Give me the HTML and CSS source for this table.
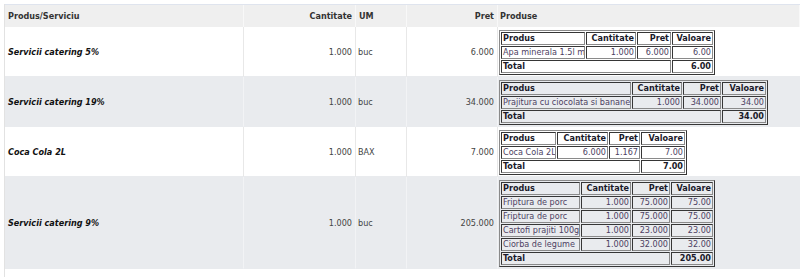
FILE: index.html
```html
<!DOCTYPE html>
<html>
<head>
<meta charset="utf-8">
<link rel="stylesheet" href="styles.css">
</head>
<body>
<div class="wrap">
<table class="grid">
  <colgroup>
    <col class="w-name"><col class="w-qty"><col class="w-um"><col class="w-price"><col>
  </colgroup>
  <thead>
    <tr>
      <th class="left">Produs/Serviciu</th>
      <th class="right">Cantitate</th>
      <th class="left">UM</th>
      <th class="right">Pret</th>
      <th class="left prod-h">Produse</th>
    </tr>
  </thead>
  <tbody>
    <tr class="odd">
      <td class="name">Servicii catering 5%</td>
      <td class="num">1.000</td>
      <td class="um">buc</td>
      <td class="num">6.000</td>
      <td class="sub">
        <table class="mini" style="width:216px">
          <colgroup><col style="width:84px"><col style="width:50px"><col style="width:34px"><col style="width:41px"></colgroup>
          <tr><th class="l">Produs</th><th>Cantitate</th><th>Pret</th><th>Valoare</th></tr>
          <tr><td class="l">Apa minerala 1.5l m</td><td>1.000</td><td>6.000</td><td>6.00</td></tr>
          <tr class="tot"><td class="l" colspan="3">Total</td><td>6.00</td></tr>
        </table>
      </td>
    </tr>
    <tr class="even">
      <td class="name">Servicii catering 19%</td>
      <td class="num">1.000</td>
      <td class="um">buc</td>
      <td class="num">34.000</td>
      <td class="sub">
        <table class="mini" style="width:269px">
          <colgroup><col style="width:130px"><col style="width:50px"><col style="width:38px"><col style="width:44px"></colgroup>
          <tr><th class="l">Produs</th><th>Cantitate</th><th>Pret</th><th>Valoare</th></tr>
          <tr><td class="l">Prajitura cu ciocolata si banane</td><td>1.000</td><td>34.000</td><td>34.00</td></tr>
          <tr class="tot"><td class="l" colspan="3">Total</td><td>34.00</td></tr>
        </table>
      </td>
    </tr>
    <tr class="odd">
      <td class="name">Coca Cola 2L</td>
      <td class="num">1.000</td>
      <td class="um">BAX</td>
      <td class="num">7.000</td>
      <td class="sub">
        <table class="mini" style="width:188px">
          <colgroup><col style="width:55px"><col style="width:51px"><col style="width:31px"><col style="width:44px"></colgroup>
          <tr><th class="l">Produs</th><th>Cantitate</th><th>Pret</th><th>Valoare</th></tr>
          <tr><td class="l">Coca Cola 2L</td><td>6.000</td><td>1.167</td><td>7.00</td></tr>
          <tr class="tot"><td class="l" colspan="3">Total</td><td>7.00</td></tr>
        </table>
      </td>
    </tr>
    <tr class="even">
      <td class="name">Servicii catering 9%</td>
      <td class="num">1.000</td>
      <td class="um">buc</td>
      <td class="num">205.000</td>
      <td class="sub">
        <table class="mini" style="width:216px">
          <colgroup><col style="width:79px"><col style="width:50px"><col style="width:38px"><col style="width:42px"></colgroup>
          <tr><th class="l">Produs</th><th>Cantitate</th><th>Pret</th><th>Valoare</th></tr>
          <tr><td class="l">Friptura de porc</td><td>1.000</td><td>75.000</td><td>75.00</td></tr>
          <tr><td class="l">Friptura de porc</td><td>1.000</td><td>75.000</td><td>75.00</td></tr>
          <tr><td class="l">Cartofi prajiti 100g</td><td>1.000</td><td>23.000</td><td>23.00</td></tr>
          <tr><td class="l">Ciorba de legume</td><td>1.000</td><td>32.000</td><td>32.00</td></tr>
          <tr class="tot"><td class="l" colspan="3">Total</td><td>205.00</td></tr>
        </table>
      </td>
    </tr>
  </tbody>
</table>
</div>
</body>
</html>
```

FILE: styles.css
```css
html, body {
  margin: 0;
  padding: 0;
  background: #ffffff;
}
body {
  font-family: "DejaVu Sans Condensed", "DejaVu Sans", sans-serif;
  font-stretch: condensed;
  font-size: 9px;
  color: #444;
}
.wrap {
  margin: 4px 0 0 4px;
  border-left: 1px solid #e2e2e2;
  min-height: 273px;
}
.grid {
  table-layout: fixed;
  width: 795px;
  border-collapse: separate;
  border-spacing: 0;
  border-top: 1px solid #dfe4ee;
}
.w-name { width: 239px; }
.w-qty { width: 112px; }
.w-um { width: 51px; }
.w-price { width: 91px; }
.grid > thead > tr > th,
.grid > tbody > tr > td {
  box-sizing: border-box;
}
.grid > thead > tr > th {
  height: 22px;
  padding: 0 3px;
  background: #efefef;
  color: #333;
  font-weight: bold;
  border-right: 1px solid #f8f8f8;
  white-space: nowrap;
}
.grid > thead > tr > th.prod-h { padding-left: 2px; }
.left { text-align: left; }
.right { text-align: right; }
.grid > tbody > tr > td {
  padding: 0 3px;
  border-bottom: 1px solid #e9ebee;
  border-right: 1px solid #e8e8e8;
  vertical-align: middle;
  white-space: nowrap;
}
.grid > tbody > tr.even > td {
  background: #e9ebee;
  border-right-color: #f2f3f5;
}
.grid > tbody > tr > td.name {
  font-weight: bold;
  font-style: italic;
  color: #111;
}
.grid > tbody > tr > td.num { text-align: right; }
.grid > tbody > tr > td.um { padding-left: 2px; }
.grid > tbody > tr > td.sub {
  padding: 3px 0 1px 1px;
  border-right: none;
}
.mini {
  table-layout: fixed;
  box-sizing: border-box;
  border: 1px outset #8a8a8a;
  border-spacing: 1px;
  background: transparent;
}
.mini th, .mini td {
  box-sizing: border-box;
  border: 1px inset #8a8a8a;
  height: 13px;
  line-height: 11px;
  padding: 0 1px;
  text-align: right;
  overflow: hidden;
  white-space: nowrap;
  font-size: 9px;
}
.mini th {
  font-weight: bold;
  color: #1a1a2a;
}
.mini td {
  color: #4d3f63;
}
.mini .l { text-align: left; }
.mini tr.tot td {
  font-weight: bold;
  color: #1a1a2a;
}
```
